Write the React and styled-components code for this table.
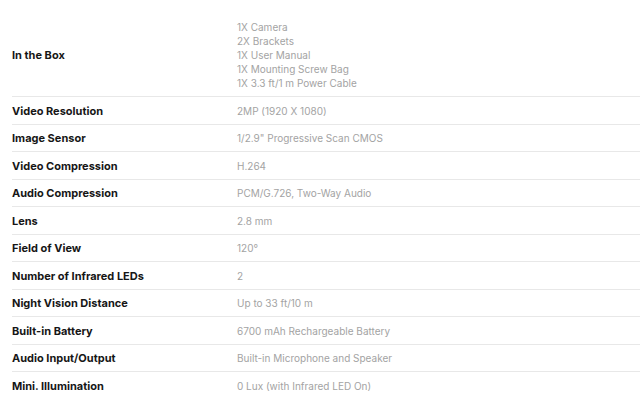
import React from "react";
import styled, { createGlobalStyle } from "styled-components";

const GlobalStyle = createGlobalStyle`
  html, body {
    margin: 0;
    padding: 0;
    background: #ffffff;
  }
`;

const Page = styled.div`
  padding: 10px 0 0 12px;
  font-family: "Inter", "Roboto", sans-serif;
  background: #fff;
`;

const Table = styled.div`
  display: flex;
  flex-direction: column;
`;

const Row = styled.div`
  display: grid;
  grid-template-columns: 225px 1fr;
  align-items: center;
  padding: ${(p) => (p.$first ? "10px" : "6.25px")} 0 6.25px;
  border-bottom: 1px solid #e8e8e8;
`;

const Label = styled.div`
  font-size: 11px;
  font-weight: 700;
  color: #161616;
  line-height: 14px;
`;

const Value = styled.div`
  font-size: 10px;
  color: #a3a3a3;
  line-height: 14px;
`;

const specs = [
  [
    "In the Box",
    [
      "1X Camera",
      "2X Brackets",
      "1X User Manual",
      "1X Mounting Screw Bag",
      "1X 3.3 ft/1 m Power Cable",
    ],
  ],
  ["Video Resolution", ["2MP (1920 X 1080)"]],
  ["Image Sensor", ["1/2.9\" Progressive Scan CMOS"]],
  ["Video Compression", ["H.264"]],
  ["Audio Compression", ["PCM/G.726, Two-Way Audio"]],
  ["Lens", ["2.8 mm"]],
  ["Field of View", ["120°"]],
  ["Number of Infrared LEDs", ["2"]],
  ["Night Vision Distance", ["Up to 33 ft/10 m"]],
  ["Built-in Battery", ["6700 mAh Rechargeable Battery"]],
  ["Audio Input/Output", ["Built-in Microphone and Speaker"]],
  ["Mini. Illumination", ["0 Lux (with Infrared LED On)"]],
];

const App = () => (
  <Page>
    <GlobalStyle />
    <Table>
      {specs.map(([label, values], i) => (
        <Row key={label} $first={i === 0}>
          <Label>{label}</Label>
          <Value>
            {values.map((v) => (
              <div key={v}>{v}</div>
            ))}
          </Value>
        </Row>
      ))}
    </Table>
  </Page>
);

export default App;
